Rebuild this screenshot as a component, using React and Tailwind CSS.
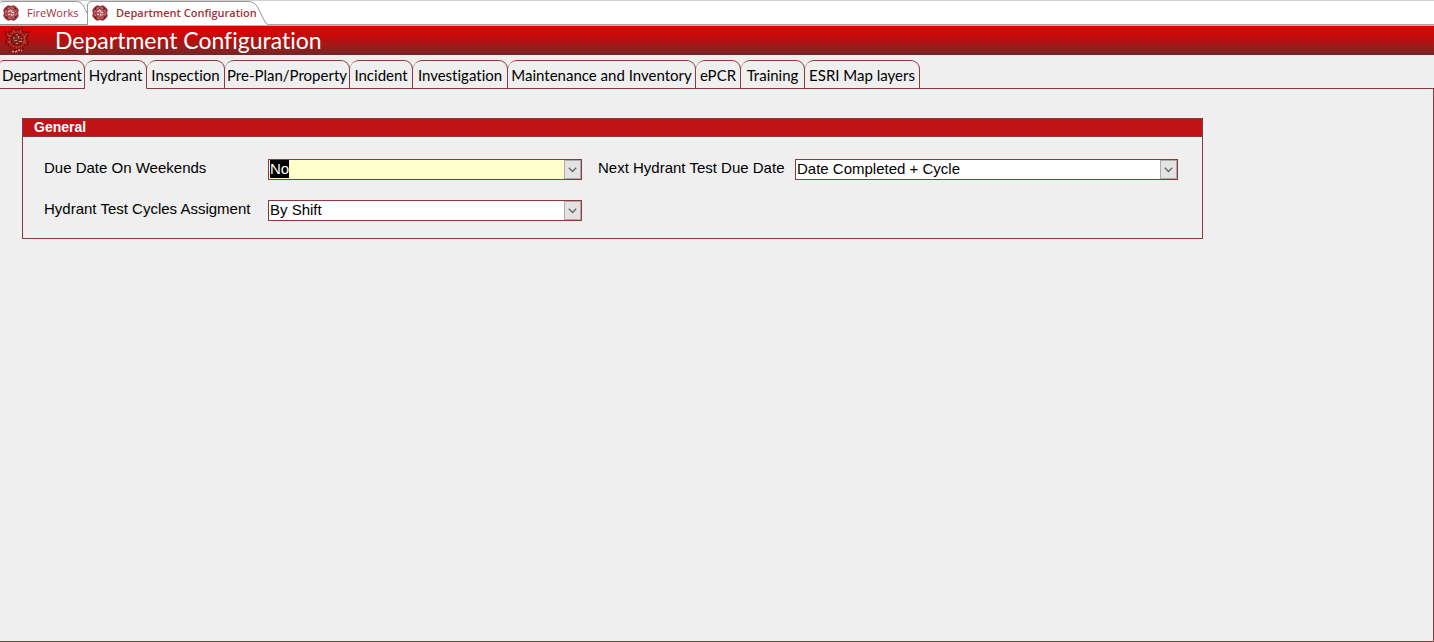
import { useState } from "react";

const documentTabs = [
  { name: "FireWorks", width: "w-[87px]", active: false },
  { name: "Department Configuration", width: "w-[181px]", active: true },
];

const sections = [
  { name: "Department", width: "w-[85px]" },
  { name: "Hydrant", width: "w-[62px]" },
  { name: "Inspection", width: "w-[78px]" },
  { name: "Pre-Plan/Property", width: "w-[125px]" },
  { name: "Incident", width: "w-[63px]" },
  { name: "Investigation", width: "w-[95px]" },
  { name: "Maintenance and Inventory", width: "w-[188px]" },
  { name: "ePCR", width: "w-[45px]" },
  { name: "Training", width: "w-[64px]" },
  { name: "ESRI Map layers", width: "w-[115px]" },
];

function Badge() {
  return (
    <svg className="h-4 w-4 shrink-0" viewBox="0 0 16 16" aria-hidden="true">
      <path
        d="M5 .2 8 .9 11 .2 13.7 2.3 15.8 5 15.1 8 15.8 11 13.7 13.7 11 15.8 8 15.1 5 15.8 2.3 13.7.2 11 .9 8 .2 5 2.3 2.3Z"
        fill="#963338"
      />
      <circle cx="8" cy="8" r="5.3" fill="none" stroke="#dba9a9" strokeWidth="1" strokeDasharray="2.6 1.5" />
      <circle cx="8" cy="8" r="3.9" fill="#b9575a" />
      <path d="M5 6.2h2.2M8.8 5.2v2.2h2.4M5.2 9.4h2M8.8 8.8v2.4M10 9.8h1.4M7.4 4.6v1.2" stroke="#f4e2e0" strokeWidth="1" fill="none" />
      <path d="M3 3.2l1.3 1.3M13 3.2l-1.3 1.3M3 12.8l1.3-1.3M13 12.8l-1.3-1.3" stroke="#6b1519" strokeWidth="1.1" />
    </svg>
  );
}

function Emblem() {
  return (
    <svg className="h-7 w-7 shrink-0" viewBox="0 0 28 28" aria-hidden="true">
      <path
        d="M9 2 14 4 19 2 20 6 26 6 24 12 26 18 21 20 19 25 14 23 9 25 7 20 2 18 4 12 2 6 8 6Z"
        fill="#a51512"
        stroke="#5c0f0b"
        strokeWidth="1.4"
        strokeDasharray="1.6 1.8"
      />
      <circle cx="14" cy="13.5" r="7.6" fill="none" stroke="#c9705c" strokeWidth="1.1" strokeDasharray="1.2 1.8" />
      <circle cx="14" cy="13.5" r="5.6" fill="#80241c" stroke="#4a130d" strokeWidth="1.2" strokeDasharray="2 1.5" />
      <path d="M10 12h2M11.5 14.5h2.4M15.5 10v2.4M16 15.5h3M13 17.5h2M18 12.5h1.5M14 8v1.4" stroke="#c99467" strokeWidth="1.2" />
      <path d="M4 8l3 3M24 8l-3 3M5 16.5l3-1M23 16.5l-3-1M10 4l1 2.5M18 4l-1 2.5" stroke="#df4941" strokeWidth="1" />
      <path d="M9 25q2.5 1.8 5 0t5 0" stroke="#f3a49b" strokeWidth="1.4" fill="none" strokeDasharray="2.2 1" />
    </svg>
  );
}

function DocumentTab({ name, width, active }) {
  return (
    <button
      type="button"
      role="tab"
      aria-selected={active}
      className={`relative h-[25px] shrink-0 ${width} ${active ? "font-semibold" : ""}`}
    >
      {active ? (
        <svg className="absolute inset-0" width="181" height="25" viewBox="0 0 181 25" aria-hidden="true">
          <path d="M.5 25V6Q.5 1.5 5 1.5H161Q168 1.5 171 8L177 20Q179 24.5 181 24.5" fill="#fff" stroke="#999" />
        </svg>
      ) : (
        <svg className="absolute inset-0" width="87" height="25" viewBox="0 0 87 25" aria-hidden="true">
          <path d="M0 3Q1 1.5 4 1.5H76Q82 1.5 84 7L87 13M0 24.5H87" fill="#fff" stroke="#999" />
        </svg>
      )}
      <span className={`relative flex h-full items-center gap-2 pt-px text-[11px] whitespace-nowrap text-[#a13238] ${active ? "pl-[5px]" : "pl-[3px]"}`}>
        <Badge />
        {name}
      </span>
    </button>
  );
}

function Combo({ id, options, highlighted = false }) {
  const [value, setValue] = useState(options[0]);
  return (
    <div className="relative flex h-[22px] min-w-0">
      <select
        id={id}
        value={value}
        onChange={(event) => setValue(event.target.value)}
        className={`h-[21px] w-full appearance-none rounded-none border border-[#8a3a3f] pr-5 pb-px pl-px text-[15px] leading-[18px] text-black outline-none ${
          highlighted ? "bg-[#ffffcc]" : "bg-white"
        }`}
      >
        {options.map((option) => (
          <option key={option}>{option}</option>
        ))}
      </select>
      {highlighted && (
        <span aria-hidden="true" className="pointer-events-none absolute top-px left-[2px] h-[18px] bg-black text-[15px] leading-[18px] text-white">
          {value}
        </span>
      )}
      <span className="pointer-events-none absolute top-px right-px flex h-[19px] w-[17px] items-center justify-center border border-[#b3abab] bg-[#e4e2e2]">
        <svg width="9" height="6" viewBox="0 0 9 6" aria-hidden="true">
          <path d="M.8.8 4.5 4.5 8.2.8" fill="none" stroke="#666" strokeWidth="1.4" />
        </svg>
      </span>
    </div>
  );
}

export default function App() {
  const [section, setSection] = useState("Hydrant");

  return (
    <div className="flex min-h-screen flex-col bg-[#efefef] font-['Liberation_Sans',Arial,sans-serif]">
      <div role="tablist" aria-label="Open documents" className="flex h-[25px] border-t border-[#d0d0d0] bg-white font-['Open_Sans',sans-serif]">
        <div className="-mt-px flex">
          {documentTabs.map((tab) => (
            <DocumentTab key={tab.name} {...tab} />
          ))}
        </div>
        <div className="flex-1 border-b border-[#a9a0a0]" />
      </div>

      <header className="flex h-[30px] items-center border-t border-b border-t-[#f0a0a0] border-b-[#6e2a2a] bg-linear-to-b from-[#e60000] via-[#b80d0d] to-[#7a2222] pl-[3px]">
        <Emblem />
        <h1 className="ml-6 font-[Lato,sans-serif] text-[23px] leading-7 text-white [font-variant-ligatures:none]">Department Configuration</h1>
      </header>

      <div role="tablist" aria-label="Configuration sections" className="flex pt-[5px] font-[Lato,sans-serif] [font-variant-ligatures:none]">
        {sections.map(({ name, width }, index) => (
          <button
            key={name}
            type="button"
            role="tab"
            aria-selected={section === name}
            onClick={() => setSection(name)}
            className={`h-[29px] shrink-0 rounded-t-[9px] border-t border-r border-b border-[#8a3a3f] text-[15px] leading-5 whitespace-nowrap text-black ${width} ${
              section === name ? "border-b-transparent" : ""
            } ${index === 0 ? "rounded-tl-[4px]" : ""}`}
          >
            {name}
          </button>
        ))}
        <div className="flex-1 border-b border-[#8a3a3f]" />
      </div>

      <main className="flex-1 border-r border-b border-[#8a3a3f] px-[22px] pt-[29px]">
        <section className="w-full max-w-[1181px] border border-[#8a3a3f]">
          <h2 className="h-[18px] border-b border-[#8a3a3f] bg-[#c01318] pl-[11px] text-[14px] leading-[17px] font-bold text-white">General</h2>
          <div className="grid grid-cols-[224px_minmax(0,314fr)_213px_minmax(0,383fr)] gap-y-[19px] pt-[22px] pr-6 pb-4 pl-[21px] text-[15px] leading-[18px]">
            <label htmlFor="weekends">Due Date On Weekends</label>
            <Combo id="weekends" options={["No", "Yes"]} highlighted />
            <label htmlFor="next-test" className="pl-4">Next Hydrant Test Due Date</label>
            <Combo id="next-test" options={["Date Completed + Cycle"]} />
            <label htmlFor="cycles">Hydrant Test Cycles Assigment</label>
            <Combo id="cycles" options={["By Shift"]} />
          </div>
        </section>
      </main>
    </div>
  );
}
